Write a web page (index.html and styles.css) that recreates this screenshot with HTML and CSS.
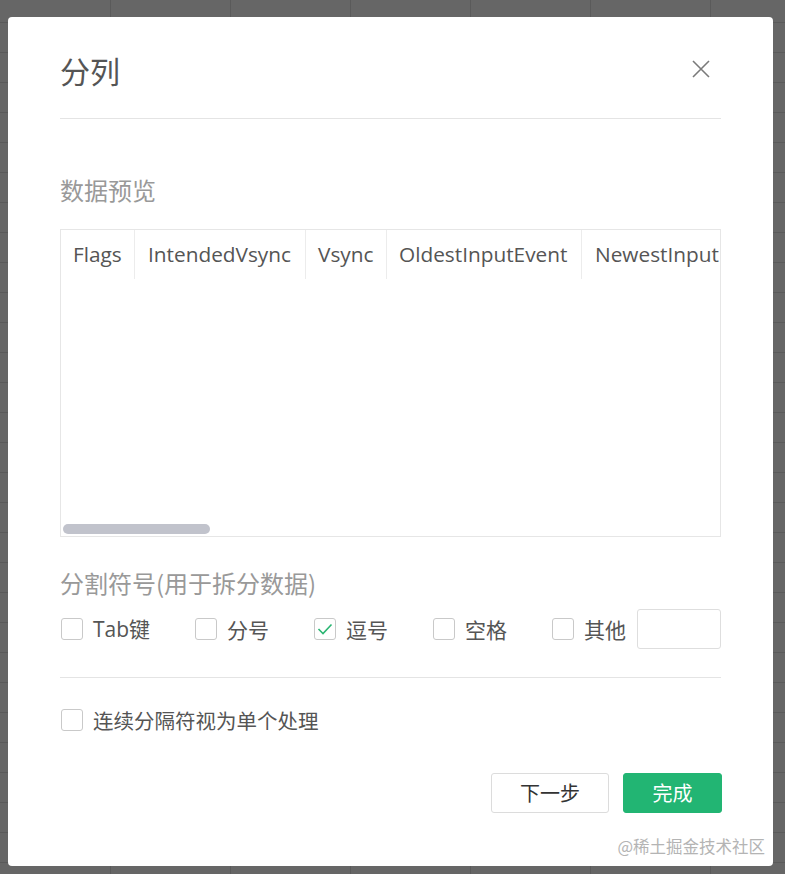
FILE: index.html
```html
<!DOCTYPE html>
<html lang="zh">
<head>
<meta charset="utf-8">
<title>分列</title>
<link rel="stylesheet" href="styles.css">
</head>
<body>
<div class="modal">
  <div class="header">
    <div class="title">分列</div>
    <svg class="close" width="20" height="20" viewBox="0 0 20 20"><path d="M2 2 L18 18 M18 2 L2 18" stroke="#7a7a7a" stroke-width="1.6" fill="none"/></svg>
  </div>

  <div class="section-title preview-title">数据预览</div>
  <div class="preview">
    <div class="thead">
      <div class="th c1">Flags</div>
      <div class="th c2">IntendedVsync</div>
      <div class="th c3">Vsync</div>
      <div class="th c4">OldestInputEvent</div>
      <div class="th c5">NewestInput</div>
    </div>
    <div class="spacer"></div>
    <div class="scroll-thumb"></div>
  </div>

  <div class="section-title sep-title">分割符号(用于拆分数据)</div>
  <div class="options">
    <label class="opt"><span class="cb"></span><span class="lbl">Tab键</span></label>
    <label class="opt"><span class="cb"></span><span class="lbl">分号</span></label>
    <label class="opt"><span class="cb checked"><svg width="18" height="18" viewBox="0 0 18 18"><path d="M2.5 9 L7 13.5 L15.5 4.5" stroke="#2bb673" stroke-width="1.6" fill="none"/></svg></span><span class="lbl">逗号</span></label>
    <label class="opt"><span class="cb"></span><span class="lbl">空格</span></label>
    <label class="opt last"><span class="cb"></span><span class="lbl">其他</span></label>
    <span class="other-input"></span>
  </div>

  <div class="divider"></div>

  <label class="opt single"><span class="cb"></span><span class="lbl">连续分隔符视为单个处理</span></label>

  <div class="footer">
    <button class="btn btn-default">下一步</button>
    <button class="btn btn-primary">完成</button>
  </div>

  <div class="watermark">@稀土掘金技术社区</div>
</div>
</body>
</html>
```

FILE: styles.css
```css
html, body {
  margin: 0;
  padding: 0;
}
body {
  width: 785px;
  height: 874px;
  overflow: hidden;
  box-sizing: border-box;
  padding: 17px 0 0 8px;
  background-color: #666;
  background-image:
    linear-gradient(to right, #5a5a5a 1px, transparent 1px),
    linear-gradient(to bottom, #5a5a5a 1px, transparent 1px);
  background-size: 120px 30px;
  background-position: 110px 22px;
  font-family: "Open Sans", "Noto Sans CJK SC", sans-serif;
  color: #555;
}
.modal {
  position: relative;
  width: 765px;
  height: 849px;
  box-sizing: border-box;
  background: #fff;
  border-radius: 4px;
  padding: 33px 52px 0 52px;
  display: flex;
  flex-direction: column;
}
.header {
  display: flex;
  align-items: center;
  justify-content: space-between;
  height: 40px;
  padding-bottom: 28px;
  border-bottom: 1px solid #e4e4e4;
}
.title {
  font-family: "Noto Sans CJK SC", sans-serif;
  font-size: 30px;
  line-height: 40px;
  color: #555;
}
.close {
  margin-right: 10px;
  margin-top: -2px;
}
.section-title {
  font-family: "Noto Sans CJK SC", sans-serif;
  font-size: 24px;
  line-height: 34px;
  color: #999;
}
.preview-title {
  margin-top: 54px;
}
.preview {
  margin-top: 22px;
  height: 308px;
  box-sizing: border-box;
  border: 1px solid #e6e6e6;
  display: flex;
  flex-direction: column;
  overflow: hidden;
}
.thead {
  display: flex;
  height: 49px;
  flex: none;
}
.th {
  flex: none;
  box-sizing: border-box;
  font-size: 20.8px;
  line-height: 49px;
  padding-left: 12px;
  color: #555;
  border-right: 1px solid #ececec;
  white-space: nowrap;
}
.c1 { width: 74px; }
.c2 { width: 171px; padding-left: 13px; }
.c3 { width: 81px; }
.c4 { width: 195px; }
.c5 { width: 137px; padding-left: 13px; border-right: none; }
.spacer {
  flex: 1;
}
.scroll-thumb {
  flex: none;
  width: 147px;
  height: 10px;
  margin: 0 0 2px 2px;
  border-radius: 5px;
  background: #c1c3cc;
}
.sep-title {
  margin-top: 29px;
}
.options {
  margin-top: 9px;
  display: flex;
  align-items: center;
  height: 40px;
}
.opt {
  display: flex;
  align-items: center;
  margin-right: 44px;
}
.opt.last {
  margin-right: 11px;
}
.cb {
  width: 22px;
  height: 22px;
  box-sizing: border-box;
  border: 1px solid #c9c9c9;
  border-radius: 3px;
  background: #fff;
  margin-left: 1px;
  display: flex;
  align-items: center;
  justify-content: center;
  flex: none;
}
.lbl {
  font-family: "Noto Sans CJK SC", sans-serif;
  font-size: 21px;
  line-height: 30px;
  color: #555;
  margin-left: 10px;
}
.options .opt:first-child .lbl {
  font-family: "Open Sans", "Noto Sans CJK SC", sans-serif;
}
.other-input {
  width: 84px;
  height: 40px;
  box-sizing: border-box;
  border: 1px solid #dedede;
  border-radius: 3px;
}
.divider {
  margin-top: 28px;
  border-top: 1px solid #e4e4e4;
}
.single {
  margin-top: 26px;
  height: 32px;
}
.single .lbl {
  font-size: 20.5px;
}
.footer {
  margin-top: 37px;
  display: flex;
  justify-content: flex-end;
  gap: 14px;
  margin-right: -1px;
}
.btn {
  height: 40px;
  box-sizing: border-box;
  border-radius: 3px;
  font-family: "Noto Sans CJK SC", sans-serif;
  font-size: 20px;
  line-height: 38px;
  padding: 0;
  cursor: pointer;
}
.btn-default {
  width: 118px;
  background: #fff;
  border: 1px solid #dcdcdc;
  color: #333;
}
.btn-primary {
  width: 99px;
  background: #22b573;
  border: 1px solid #22b573;
  color: #fff;
}
.watermark {
  position: absolute;
  right: 8px;
  bottom: 9px;
  font-family: "Noto Sans CJK SC", sans-serif;
  font-size: 16.5px;
  line-height: 22px;
  color: #b4b4b4;
}
```
